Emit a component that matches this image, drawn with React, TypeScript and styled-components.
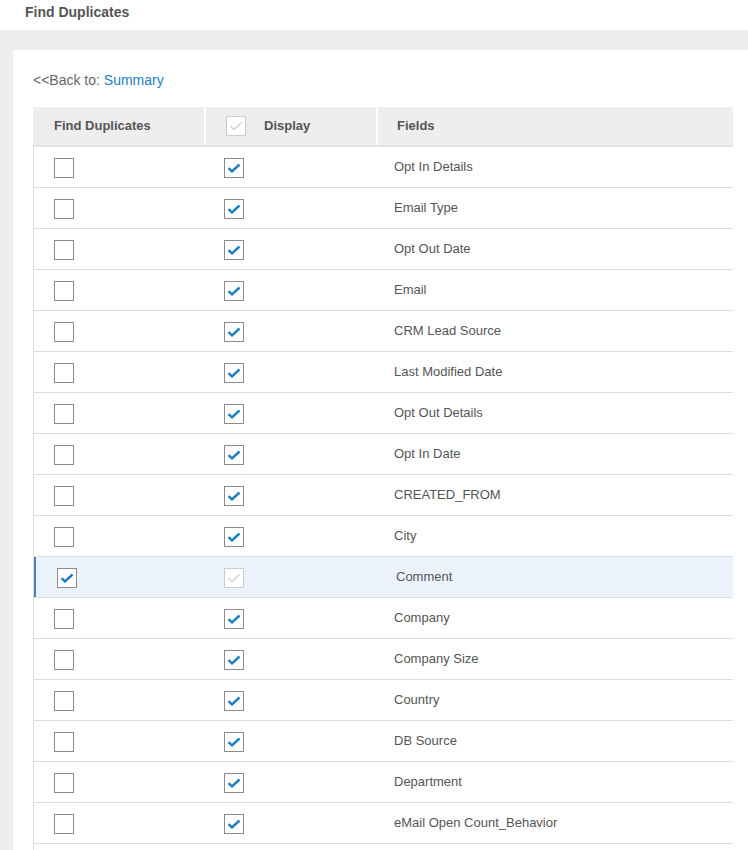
import React from "react";
import styled, { createGlobalStyle, css } from "styled-components";

const GlobalStyle = createGlobalStyle`
  html, body {
    margin: 0;
    padding: 0;
    background: #ffffff;
  }

  body {
    font-family: "Liberation Sans", Arial, sans-serif;
    color: #444;
  }
`;

const Page = styled.div`
  width: 748px;
  height: 850px;
  overflow: hidden;
  background: #eeeeee;
`;

const TitleBar = styled.div`
  height: 30px;
  background: #ffffff;
  padding-left: 25px;
  display: flex;
  align-items: center;
  box-sizing: border-box;
  padding-bottom: 6px;
`;

const Title = styled.h1`
  margin: 0;
  font-size: 14px;
  font-weight: 700;
  color: #555555;
`;

const Panel = styled.div`
  margin: 20px 0 0 13px;
  background: #ffffff;
  padding: 22px 15px 0 20px;
  height: 800px;
  box-sizing: border-box;
`;

const BackLink = styled.div`
  font-size: 14px;
  color: #666666;
  height: 16px;
  line-height: 16px;
  margin-bottom: 19px;

  a {
    color: #1a7fc3;
    text-decoration: none;
  }
`;

const Table = styled.div`
  display: flex;
  flex-direction: column;
  min-height: 760px;
  border-left: 1px solid #dddddd;
`;

const HeaderRow = styled.div`
  display: grid;
  grid-template-columns: 170px 170px 1fr;
  column-gap: 2px;
  border-bottom: 2px solid #e2e2e2;
  margin-left: -1px;
  padding-left: 1px;
  background: #eeeeee;
`;

const HeaderCell = styled.div<{ $pad: number }>`
  height: 38px;
  background: #eeeeee;
  display: flex;
  align-items: center;
  gap: 18px;
  padding-left: ${(p) => p.$pad}px;
  padding-bottom: 1px;
  box-sizing: border-box;
  font-size: 13px;
  font-weight: 700;
  color: #555555;
  box-shadow: 2px 0 0 #ffffff;

  &:last-child {
    box-shadow: none;
  }
`;

const Row = styled.div<{ $active?: boolean }>`
  display: grid;
  grid-template-columns: 170px 170px 1fr;
  column-gap: 2px;
  height: 40px;
  border-bottom: 1px solid #dddddd;

  ${(p) =>
    p.$active &&
    css`
      background: #ebf2fc;
      box-shadow: inset 2px 0 0 #4a7fc8;
    `}
`;

const Cell = styled.div<{ $pad: number }>`
  display: flex;
  align-items: center;
  padding-left: ${(p) => p.$pad}px;
  padding-bottom: 2px;
  font-size: 13px;
  color: #555555;
`;

const BoxWrap = styled.span`
  padding-top: 4px;
  display: inline-flex;
`;

const Box = styled.span<{ $muted?: boolean }>`
  width: 20px;
  height: 20px;
  box-sizing: border-box;
  border: 1px solid ${(p) => (p.$muted ? "#cccccc" : "#8c8c8c")};
  background: #ffffff;
  display: inline-flex;
  align-items: center;
  justify-content: center;
  flex: none;
`;

const Check: React.FC<{ muted?: boolean }> = ({ muted }) => (
  <svg width="14" height="10" viewBox="0 0 14 10">
    <path
      d="M1.5 5.2 L5 8.4 L12.5 1.5"
      fill="none"
      stroke={muted ? "#cccccc" : "#1a7fc3"}
      strokeWidth={muted ? 1.3 : 2.4}
    />
  </svg>
);

const CheckBox: React.FC<{ checked?: boolean; muted?: boolean }> = ({
  checked,
  muted,
}) => (
  <Box $muted={muted}>{checked && <Check muted={muted} />}</Box>
);

const fields = [
  "Opt In Details",
  "Email Type",
  "Opt Out Date",
  "Email",
  "CRM Lead Source",
  "Last Modified Date",
  "Opt Out Details",
  "Opt In Date",
  "CREATED_FROM",
  "City",
  "Comment",
  "Company",
  "Company Size",
  "Country",
  "DB Source",
  "Department",
  "eMail Open Count_Behavior",
];

const App: React.FC = () => {
  return (
    <Page>
      <GlobalStyle />

      {/* TITLE */}
      <TitleBar>
        <Title>Find Duplicates</Title>
      </TitleBar>

      <Panel>
        <BackLink>
          &lt;&lt;Back to: <a href="#">Summary</a>
        </BackLink>

        {/* TABLE */}
        <Table>
          <HeaderRow>
            <HeaderCell $pad={20}>Find Duplicates</HeaderCell>
            <HeaderCell $pad={20}>
              <CheckBox checked muted />
              Display
            </HeaderCell>
            <HeaderCell $pad={19}>Fields</HeaderCell>
          </HeaderRow>

          {fields.map((f) => {
            const active = f === "Comment";
            return (
              <Row key={f} $active={active}>
                <Cell $pad={active ? 23 : 20}>
                  <BoxWrap>
                    <CheckBox checked={active} />
                  </BoxWrap>
                </Cell>
                <Cell $pad={18}>
                  <BoxWrap>
                    <CheckBox checked muted={active} />
                  </BoxWrap>
                </Cell>
                <Cell $pad={active ? 18 : 16}>{f}</Cell>
              </Row>
            );
          })}
        </Table>
      </Panel>
    </Page>
  );
};

export default App;
